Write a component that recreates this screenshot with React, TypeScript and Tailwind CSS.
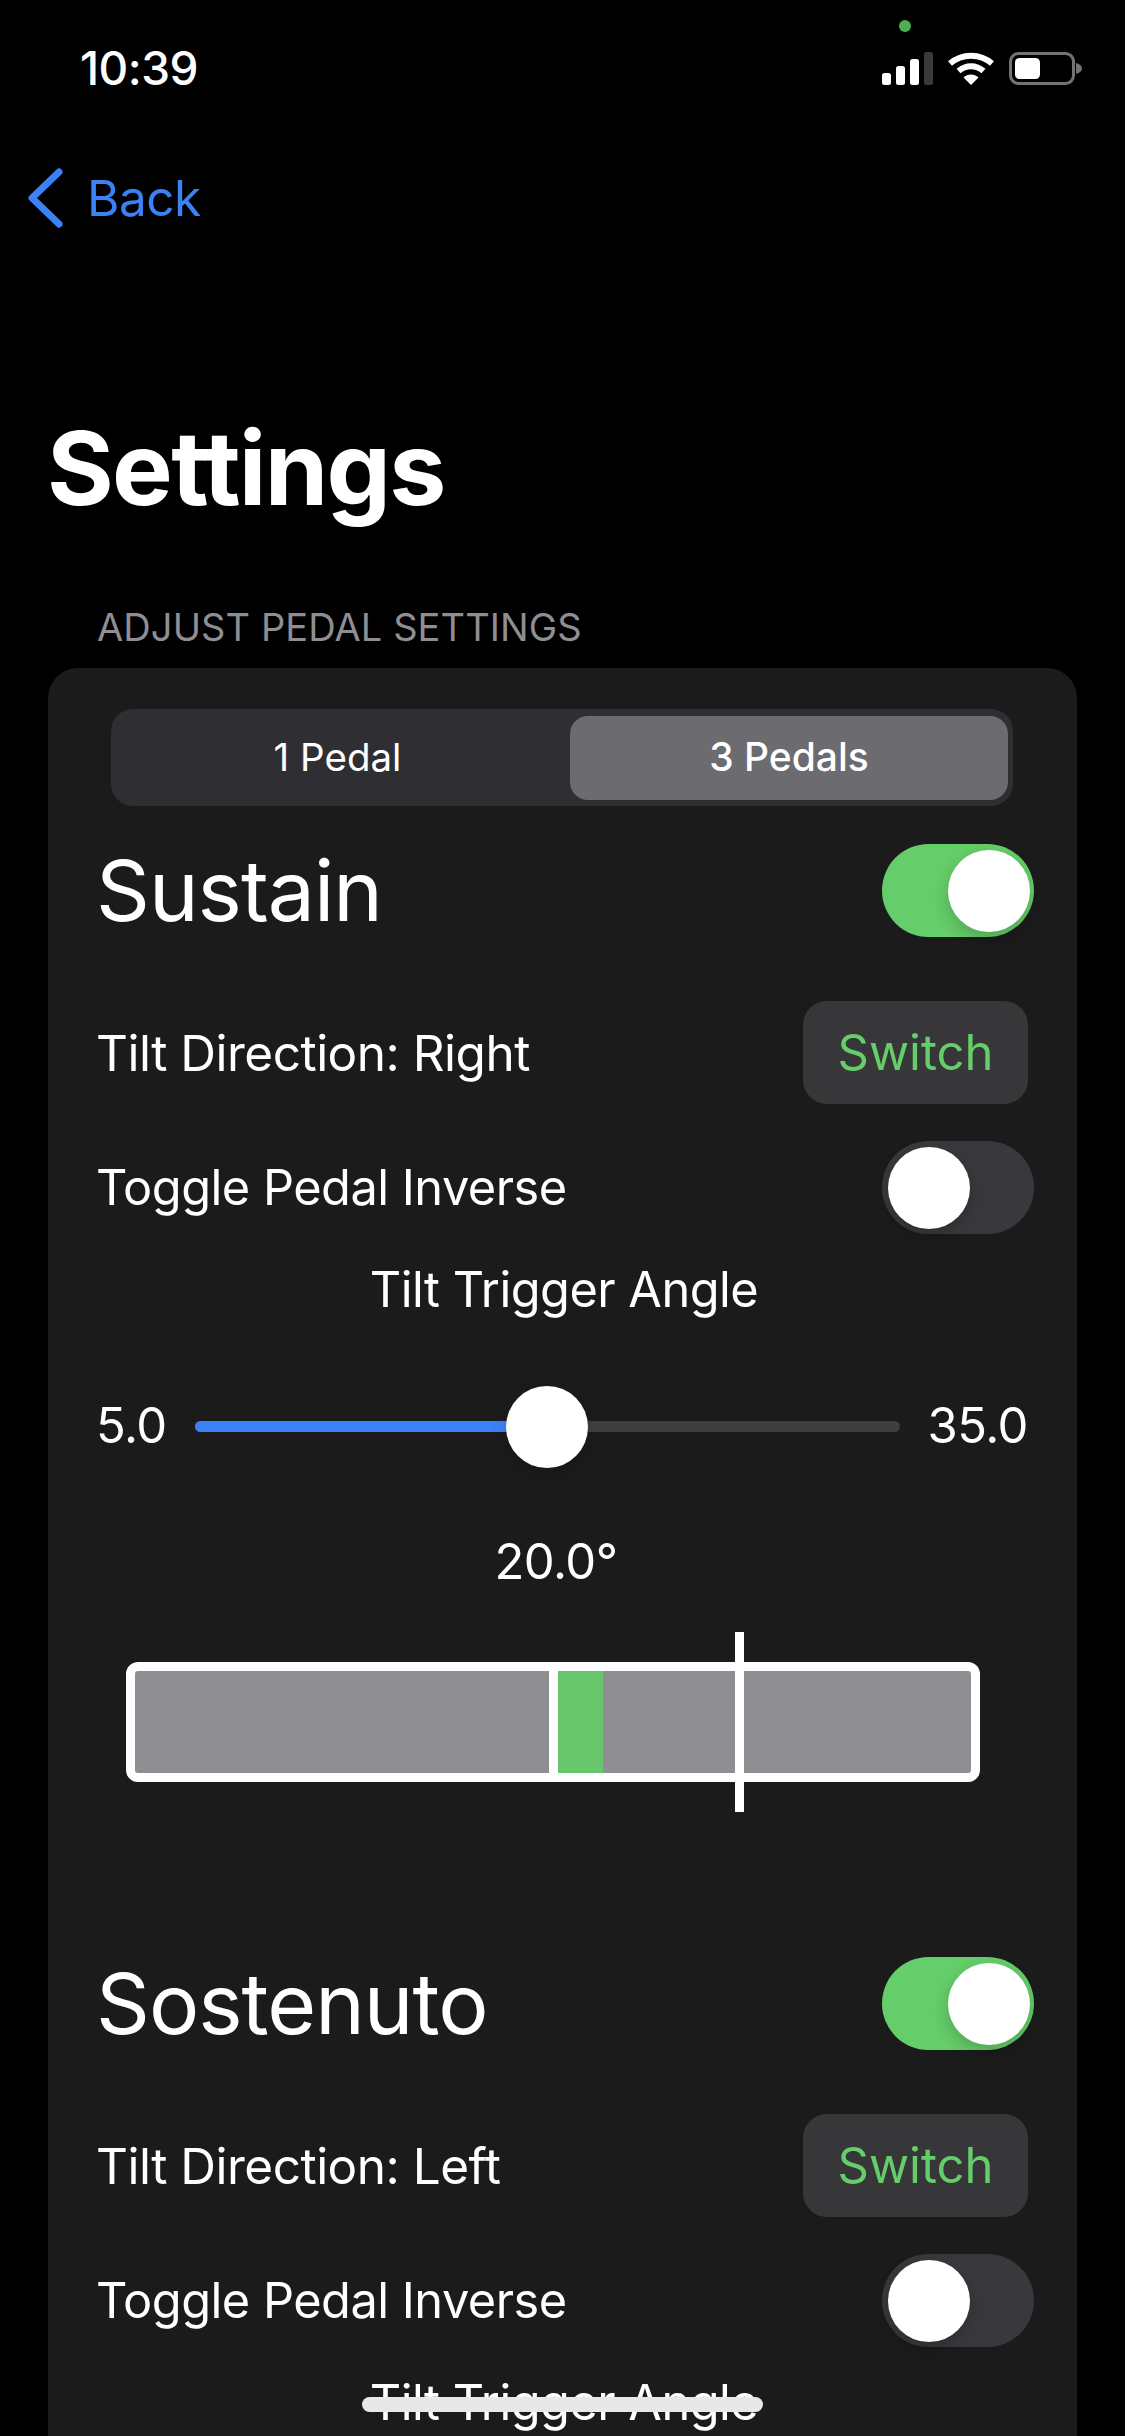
function Toggle ({ on }: Readonly<{ on: boolean }>) {
  return (
    <div className={on
      ? 'flex items-center justify-end w-[152px] h-[93px] rounded-full bg-[#65cd69] pr-[4px]'
      : 'flex items-center justify-start w-[152px] h-[93px] rounded-full bg-[#39393d] pl-[6px]'}>
      <div className="w-[82px] h-[82px] rounded-full bg-white shadow-[0_6px_16px_rgba(0,0,0,0.2)]" />
    </div>
  )
}

function TriggerControls () {
  return (
    <>
      <div className="flex items-center justify-between pl-[48px] pr-[49px] mt-[65px] h-[82px]">
        <span className="text-[49px] tracking-[-0.5px] text-white">5.0</span>
        <div className="relative flex w-[705px] h-[11px] rounded-full bg-[#3f3f42]">
          <div className="w-[330px] rounded-l-full bg-[#3b82f6]" />
          <div className="absolute left-[311px] top-[-35px] w-[82px] h-[82px] rounded-full bg-white shadow-[0_6px_16px_rgba(0,0,0,0.15)]" />
        </div>
        <span className="text-[49px] tracking-[-0.5px] text-white">35.0</span>
      </div>
      <div className="mt-[65px] h-[60px] text-center text-[49px] leading-[60px] tracking-[-0.5px] text-white pr-[13px]">20.0°</div>
      <div className="relative flex items-center mt-[40px] ml-[78px] w-[854px] h-[180px]">
        <div className="flex w-full h-[120px] rounded-[12px] border-[9px] border-white bg-[#8e8e93]">
          <div className="w-[414px]" />
          <div className="w-[9px] bg-white" />
          <div className="w-[45px] bg-[#68c76d]" />
        </div>
        <div className="absolute left-[609px] top-0 w-[9px] h-[180px] bg-white" />
      </div>
    </>
  )
}

function PedalSection ({ name, direction, children }: Readonly<{ name: string, direction: string, children?: React.ReactNode }>) {
  return (
    <section className="flex flex-col">
      <div className="flex items-center justify-between pl-[48px] pr-[43px]">
        <span className="text-[84px] leading-[93px] tracking-[-1px] text-white">{name}</span>
        <Toggle on />
      </div>
      <div className="flex items-center justify-between pl-[48px] pr-[49px] mt-[64px]">
        <span className="text-[49.5px] leading-[60px] tracking-[-0.5px] text-white">Tilt Direction: {direction}</span>
        <button className="w-[225px] h-[103px] rounded-[24px] bg-[#37373a] text-[49px] text-[#65cd69]">Switch</button>
      </div>
      <div className="flex items-center justify-between pl-[48px] pr-[43px] mt-[37px]">
        <span className="text-[48.7px] leading-[60px] tracking-[-0.5px] text-white">Toggle Pedal Inverse</span>
        <Toggle on={false} />
      </div>
      <div className="mt-[26px] h-[60px] text-center text-[48.7px] leading-[60px] tracking-[-0.5px] text-white pl-[3px]">Tilt Trigger Angle</div>
      {children}
    </section>
  )
}

export default function App () {
  return (
    <div className="relative h-[2436px] overflow-hidden bg-black font-['Inter',sans-serif]">
      <div className="absolute left-[899px] top-[20px] w-[12px] h-[12px] rounded-full bg-[#4caf50]" />
      <header className="flex items-center justify-between h-[136px] pl-[80px] pr-[43px]">
        <span className="text-[46px] font-medium tracking-[-0.5px] text-white">10:39</span>
        <div className="flex items-center gap-[15px]">
          <svg width="51" height="33" viewBox="0 0 51 33">
            <rect x="0" y="21" width="9" height="12" rx="2.5" fill="#fff" />
            <rect x="14" y="14" width="9" height="19" rx="2.5" fill="#fff" />
            <rect x="28" y="7" width="9" height="26" rx="2.5" fill="#fff" />
            <rect x="42" y="0" width="9" height="33" rx="2.5" fill="#3a3a3c" />
          </svg>
          <svg width="46" height="33" viewBox="0 0 46 33">
            <path d="M2 11.5 C 14 1, 32 1, 44 11.5" fill="none" stroke="#fff" strokeWidth="6" />
            <path d="M10.5 19 C 18 12.5, 28 12.5, 35.5 19" fill="none" stroke="#fff" strokeWidth="6" />
            <path d="M23 33 L15.5 25.5 C 19.5 21.5, 26.5 21.5, 30.5 25.5 Z" fill="#fff" />
          </svg>
          <svg width="73" height="33" viewBox="0 0 73 33">
            <rect x="1.5" y="1.5" width="63" height="30" rx="8" fill="none" stroke="#737373" strokeWidth="3" />
            <rect x="6" y="6" width="25" height="21" rx="4.5" fill="#fff" />
            <path d="M67 11 C 71 12, 73 14, 73 16.5 C 73 19, 71 21, 67 22 Z" fill="#737373" />
          </svg>
        </div>
      </header>
      <div className="flex items-center h-[124px]">
        <svg className="ml-[27px]" width="36" height="62" viewBox="0 0 36 62">
          <path d="M32 5 L5 31 L32 57" fill="none" stroke="#3b82f6" strokeWidth="7" strokeLinecap="round" strokeLinejoin="round" />
        </svg>
        <span className="ml-[24px] text-[49.5px] tracking-[-0.5px] text-[#3b82f6]">Back</span>
      </div>
      <h1 className="mt-[148px] ml-[47px] text-[102px] leading-[120px] font-bold tracking-[-1.7px] text-white">Settings</h1>
      <p className="mt-[77px] ml-[97px] text-[38px] leading-[44px] tracking-[0.1px] text-[#8e8e93]">ADJUST PEDAL SETTINGS</p>
      <main className="mt-[19px] mx-[48px] h-[1900px] rounded-[30px] bg-[#1b1b1c] pt-[41px]">
        <div className="flex items-center ml-[63px] mr-[64px] h-[97px] rounded-[22px] bg-[#2f2f33] pl-[2px] pr-[5px]">
          <div className="flex-1 text-center text-[38.5px] text-white pr-[8px]">1 Pedal</div>
          <div className="flex items-center justify-center w-[438px] h-[84px] rounded-[18px] bg-[#6b6b70] text-[39px] font-medium text-white">3 Pedals</div>
        </div>
        <div className="flex flex-col gap-[145px] mt-[38px]">
          <PedalSection name="Sustain" direction="Right">
            <TriggerControls />
          </PedalSection>
          <PedalSection name="Sostenuto" direction="Left" />
        </div>
      </main>
      <div className="absolute left-[362px] top-[2397px] w-[401px] h-[15px] rounded-full bg-[#e8e8e8]" />
    </div>
  )
}
